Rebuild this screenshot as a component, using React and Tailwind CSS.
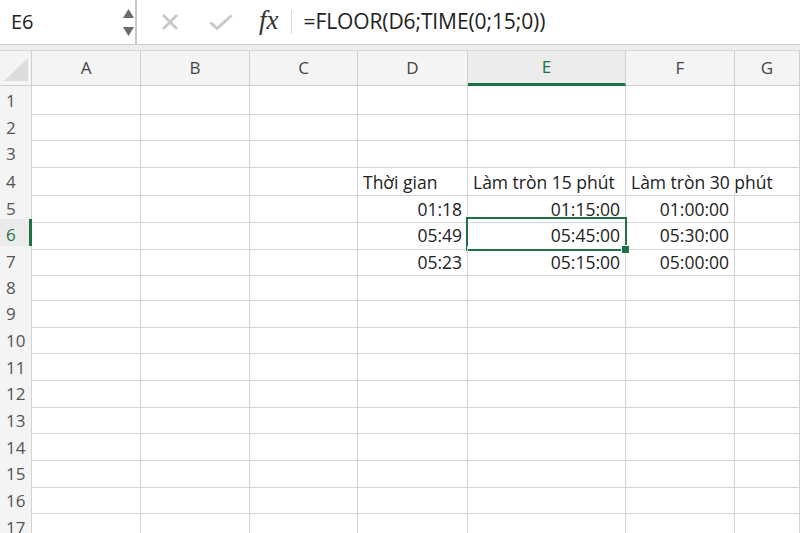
import React from 'react';

const cols = ['A', 'B', 'C', 'D', 'E', 'F', 'G'];
const gridCols = 'grid grid-cols-[32px_109px_109px_108px_110px_158px_109px_1fr]';

const data = {
  4: { D: ['Thời gian', 'left'], E: ['Làm tròn 15 phút', 'left'], F: ['Làm tròn 30 phút', 'left'] },
  5: { D: ['01:18'], E: ['01:15:00'], F: ['01:00:00'] },
  6: { D: ['05:49'], E: ['05:45:00'], F: ['05:30:00'] },
  7: { D: ['05:23'], E: ['05:15:00'], F: ['05:00:00'] }
};

export default function App() {
  const rows = Array.from({ length: 18 }, (_, i) => i + 1);

  return (
    <div className="w-[800px] h-[533px] overflow-hidden bg-white text-[#222] font-['Open_Sans','Liberation_Sans',sans-serif]">
      {/* formula bar */}
      <div className="flex h-[44px] bg-white">
        <div className="relative flex items-center w-[137px] border-r-2 border-[#c9c9c9] pl-[11px]">
          <span className="text-[20px]">E6</span>
          <div className="absolute right-[1px] top-[9px] flex flex-col gap-[9px]">
            <svg width="11" height="9" viewBox="0 0 11 9"><path d="M5.5 0L11 9H0z" fill="#6a6a6a" /></svg>
            <svg width="11" height="9" viewBox="0 0 11 9"><path d="M0 0h11L5.5 9z" fill="#6a6a6a" /></svg>
          </div>
        </div>
        <div className="flex items-center flex-1">
          <svg className="ml-[24px]" width="18" height="18" viewBox="0 0 18 18">
            <path d="M2 2L16 16M16 2L2 16" stroke="#c8c8c8" strokeWidth="2.8" />
          </svg>
          <svg className="ml-[30px]" width="24" height="17" viewBox="0 0 24 17">
            <path d="M1.5 8.5L8 14.5L22.5 1.5" stroke="#c8c8c8" strokeWidth="2.8" fill="none" />
          </svg>
          <span className="ml-[26px] text-[27px] italic text-[#333] font-['Liberation_Serif',serif] leading-none -mt-[4px]">fx</span>
          <div className="ml-[12px] w-px h-[24px] bg-[#d8d8d8]" />
          <span className="ml-[12px] text-[21px] tracking-[-0.1px]">=FLOOR(D6;TIME(0;15;0))</span>
        </div>
      </div>
      <div className="h-[6px] border-t border-[#c8c8c8] bg-[#ededed]" />

      {/* column headers */}
      <div className={`${gridCols} h-[36px] bg-[#f4f4f4] border-t border-[#d6d6d6]`}>
        <div className="relative border-r border-b border-[#cfcfcf]">
          <svg className="absolute left-[4px] bottom-[4px]" width="24" height="23" viewBox="0 0 24 23">
            <path d="M24 0V23H0z" fill="#dcdcdc" />
          </svg>
        </div>
        {cols.map(c => (
          <div
            key={c}
            className={
              c === 'E'
                ? 'flex items-center justify-center text-[17px] text-[#1e7145] bg-[#ececec] border-r border-[#d2d2d2] border-b-[3px] border-b-[#1e7145]'
                : 'flex items-center justify-center text-[17px] text-[#444] border-r border-b border-[#cfcfcf]'
            }
          >
            {c}
          </div>
        ))}
      </div>

      {/* rows */}
      {rows.map(r => (
        <div key={r} className={`${gridCols} h-[26.67px]`}>
          <div
            className={
              r === 6
                ? 'flex items-center pl-[6px] pt-[2px] text-[17px] text-[#1e7145] bg-[#ebebeb] border-r-[3px] border-r-[#1e7145] border-b border-[#d2d2d2]'
                : 'flex items-center pl-[6px] pt-[2px] text-[17px] text-[#555] bg-[#f4f4f4] border-r border-b border-[#d2d2d2]'
            }
          >
            {r}
          </div>
          {cols.map(c => {
            const cell = data[r]?.[c];
            const selected = r === 6 && c === 'E';
            // text spilling into the next column hides the gridline, as Excel does
            const spills = r === 4 && c === 'F';
            return (
              <div
                key={c}
                className={
                  'relative flex items-center pl-[5px] pr-[5px] pt-[3px] text-[17.5px] whitespace-nowrap border-r border-b border-[#d4d4d4] ' +
                  (cell && cell[1] === 'left' ? 'justify-start ' : 'justify-end ') +
                  (spills ? 'border-r-transparent z-10' : '')
                }
              >
                {cell ? cell[0] : ''}
                {selected && (
                  <>
                    <div className="absolute -left-[2px] -top-[2px] -right-[2px] -bottom-[2px] border-2 border-[#1e7145]" />
                    <div className="absolute z-20 -right-[5px] -bottom-[5px] w-[9px] h-[9px] bg-[#1e7145] border border-white" />
                  </>
                )}
              </div>
            );
          })}
        </div>
      ))}
    </div>
  );
}
